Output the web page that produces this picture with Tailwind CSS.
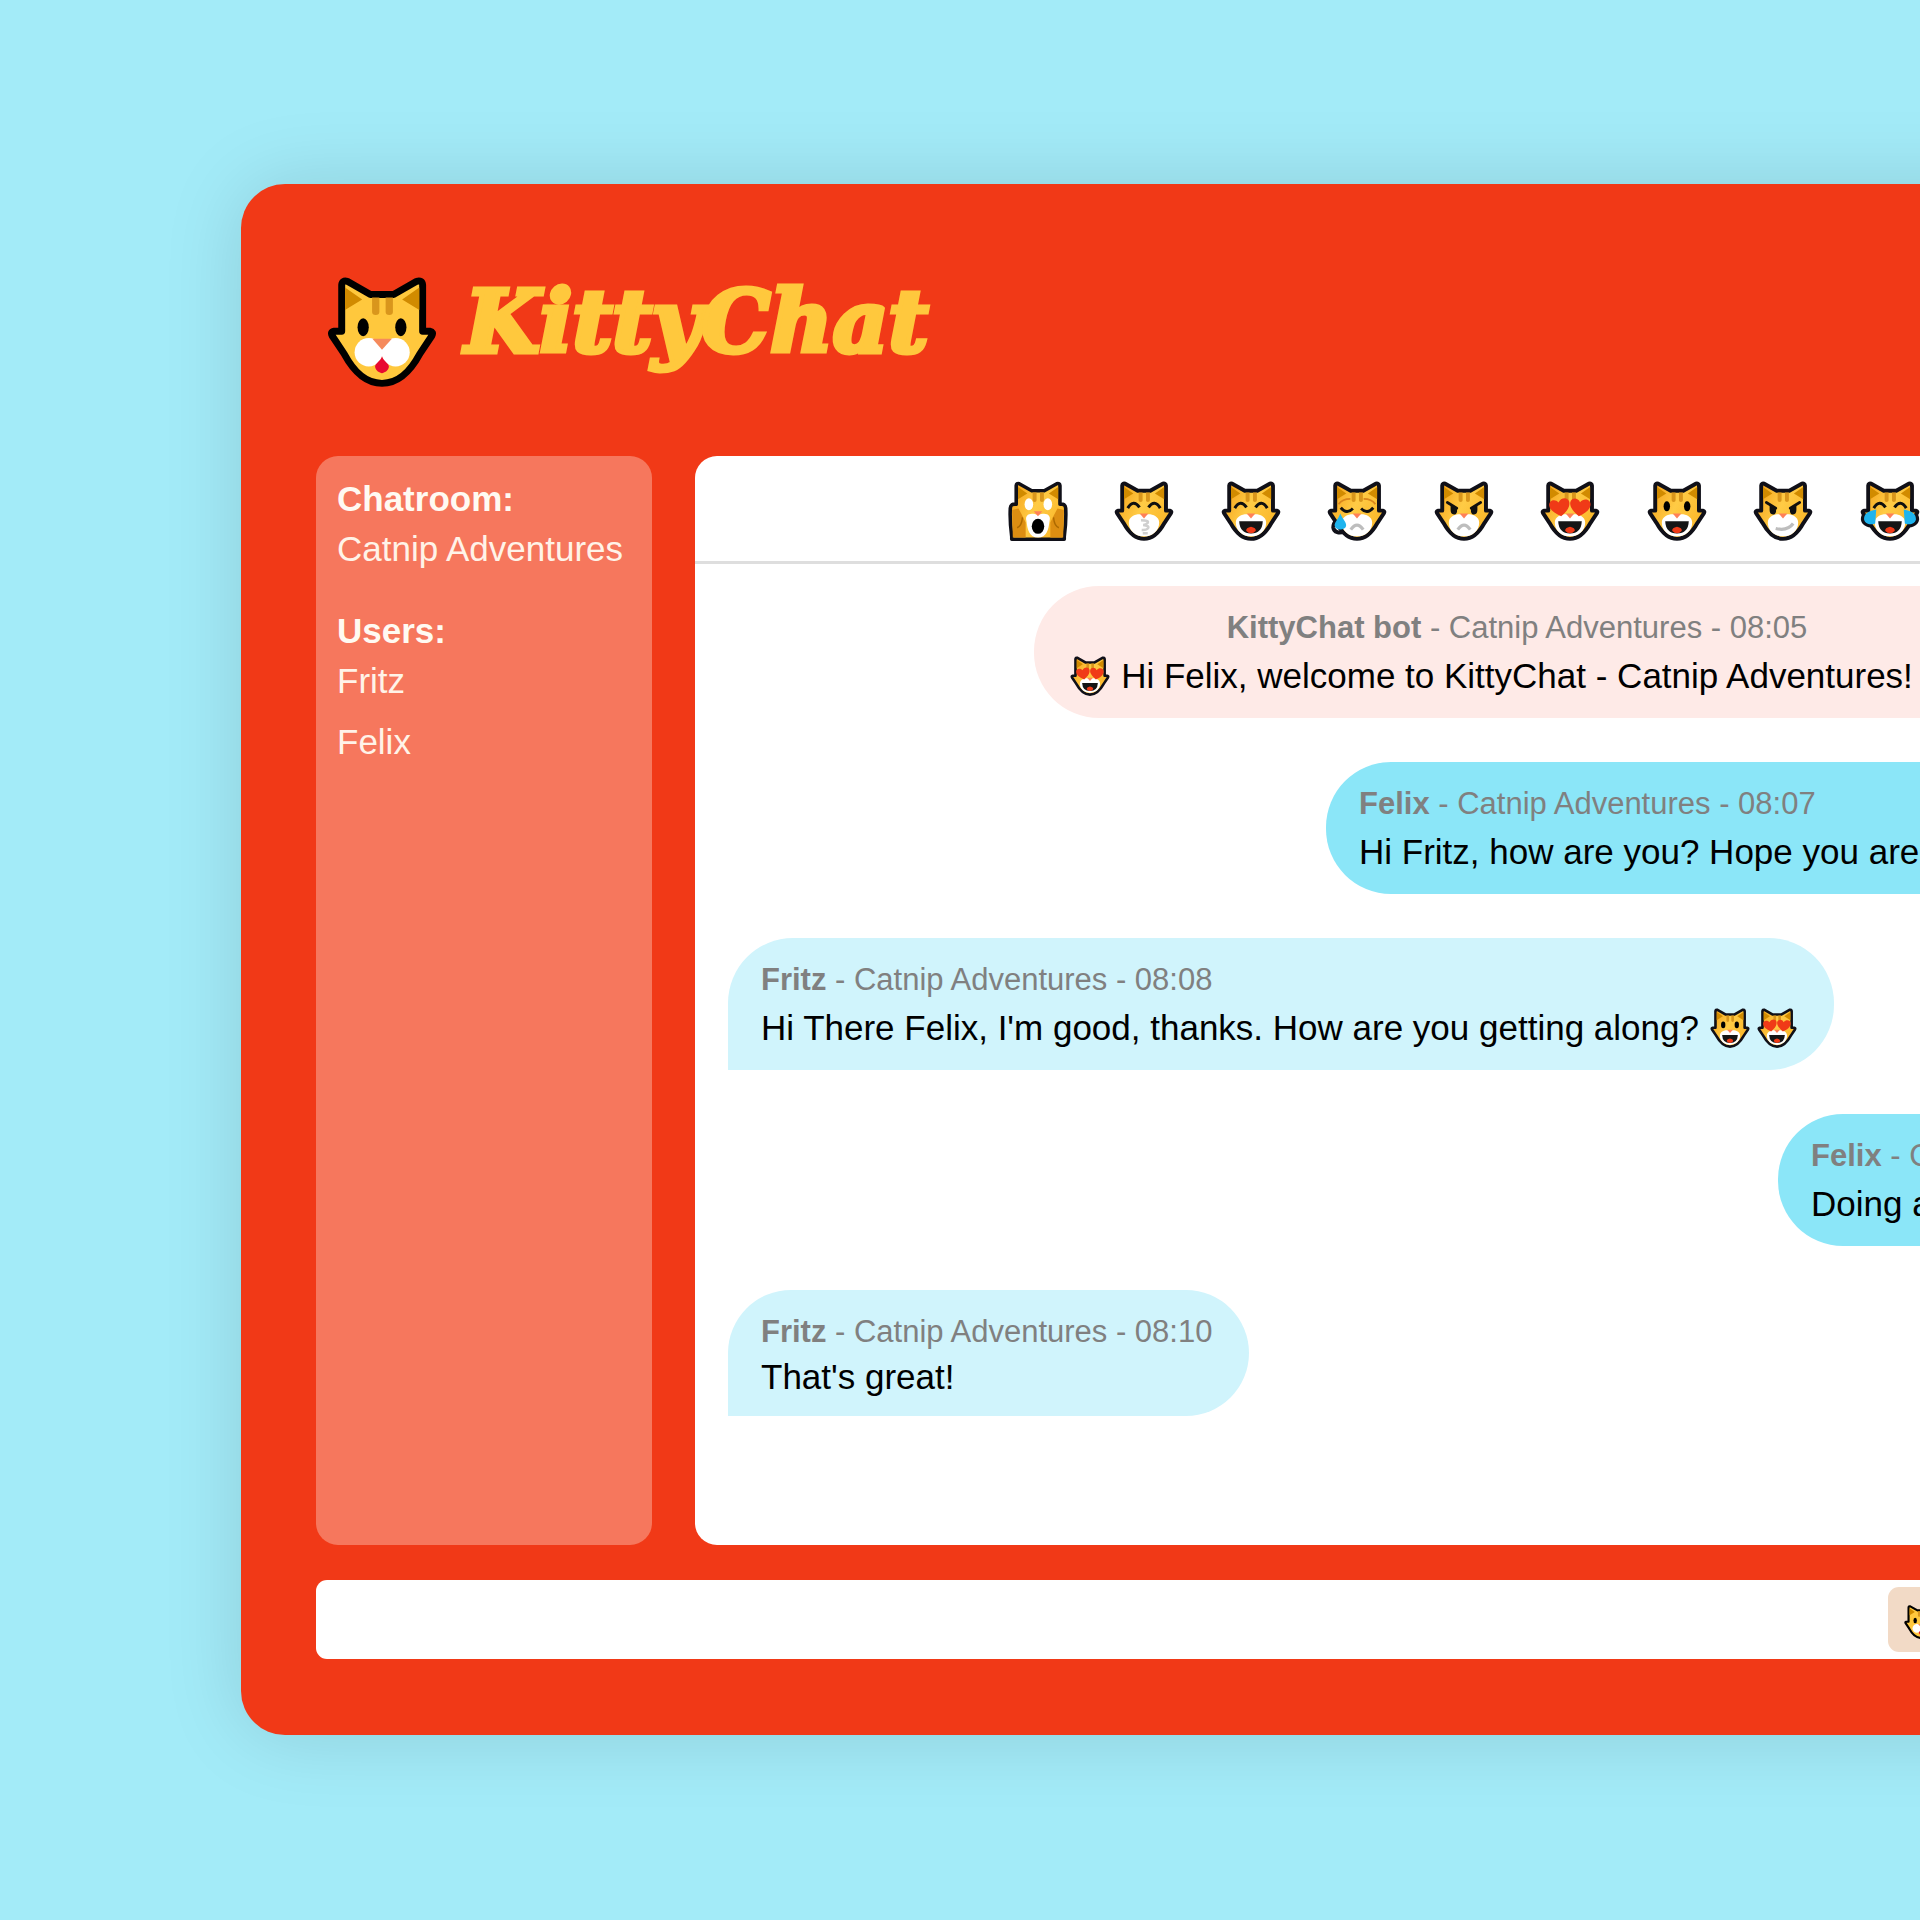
<!DOCTYPE html>
<html lang="en">
<head>
<meta charset="utf-8">
<meta name="viewport" content="width=device-width, initial-scale=1">
<title>KittyChat</title>
<script src="https://cdn.jsdelivr.net/npm/@tailwindcss/browser@4"></script>
</head>
<body class="min-h-screen overflow-x-hidden bg-[#a3ebf8] font-['Liberation_Sans',Arial,sans-serif]">

<!-- Shared cat artwork -->
<svg class="absolute size-0" aria-hidden="true">
  <defs>
    <linearGradient id="fur" gradientUnits="userSpaceOnUse" x1="50" y1="60" x2="330" y2="200">
      <stop offset="0" stop-color="#f5a31c"/><stop offset="0.5" stop-color="#ffcb45"/><stop offset="1" stop-color="#fbb92c"/>
    </linearGradient>
    <path id="outline" d="M42 184H65V44Q66 29 82 33L152 73H222L292 33Q309 29 310 44V184H332Q344 186 338 198L302 252C270 311 235 342 187 342C139 342 104 311 72 252L36 198Q30 186 42 184Z"/>
    <g id="marks">
      <path d="M75 52L127 88L75 120ZM300 52L248 88L300 120Z" fill="#d18b00"/>
      <path d="M157 82H179V126Q179 135 168 135Q157 135 157 126ZM198 82H220V126Q220 135 209 135Q198 135 198 126Z" fill="#d9961c"/>
    </g>
    <g id="head">
      <use href="#outline" fill="url(#fur)" stroke="#101018" stroke-width="22" stroke-linejoin="round"/>
      <use href="#marks"/>
    </g>
    <g id="muzzle">
      <path d="M187 209C212 196 272 208 272 250C272 296 235 328 187 328C139 328 102 296 102 250C102 208 162 196 187 209Z" fill="#fff"/>
      <path d="M163 200H211L187 228Z" fill="#ff8058"/>
    </g>
    <g id="laugh">
      <path d="M121 244H253Q250 312 187 312Q124 312 121 244Z" fill="#151515"/>
      <path d="M187 274Q216 280 214 297Q202 311 187 311Q172 311 160 297Q158 280 187 274Z" fill="#f03a17"/>
    </g>
    <path id="frown" d="M152 290Q187 240 222 290" fill="none" stroke="#bdbdbd" stroke-width="18"/>
    <g id="dots" fill="#000"><ellipse cx="130" cy="160" rx="18" ry="28"/><ellipse cx="244" cy="160" rx="18" ry="28"/></g>
    <path id="smile-eyes" d="M96 170Q128 118 162 166M212 166Q246 118 278 170" fill="none" stroke="#101010" stroke-width="17"/>
    <g id="angry-eyes"><path d="M94 138L146 170M280 138L228 170" stroke="#101010" stroke-width="16" stroke-linecap="round"/><path d="M112 148L148 168V190Q144 206 130 206Q112 202 112 180ZM262 148L226 168V190Q230 206 244 206Q262 202 262 180Z" fill="#101010"/></g>
    <path id="heart" d="M0 98C-40 72 -60 50 -58 26C-54 0 -20 -6 -4 20C12 -8 52 -6 56 24C58 52 34 78 0 98Z" fill="#f03a17"/>

    <symbol id="cat-logo" viewBox="22 20 330 333">
      <use href="#outline" fill="#ffc83d" stroke="#000" stroke-width="21" stroke-linejoin="round"/>
      <use href="#marks"/>
      <ellipse cx="130" cy="172" rx="17" ry="27"/><ellipse cx="244" cy="172" rx="17" ry="27"/>
      <circle cx="147" cy="248" r="43" fill="#fff"/><circle cx="228" cy="248" r="43" fill="#fff"/>
      <path d="M158 207H217L187 240Z" fill="#f58a5c"/>
      <path d="M187 260C191 276 208 280 208 292C206 304 194 311 187 311C180 311 168 304 166 292C166 280 183 276 187 260Z" fill="#e80a30"/>
    </symbol>
    <symbol id="cat-scream" viewBox="20 18 334 336">
      <path d="M40 344V330Q28 240 32 170Q34 144 65 148V44Q66 29 82 33L152 73H222L292 33Q309 29 310 44V148Q340 144 342 170Q346 240 334 330V344Z" fill="url(#fur)" stroke="#101018" stroke-width="20" stroke-linejoin="round"/>
      <use href="#marks"/>
      <path d="M42 180L78 172L98 210L118 250V334H46ZM332 180L296 172L276 210L256 250V334H328Z" fill="#dd8e12"/>
      <path d="M70 280Q96 270 100 222M304 280Q278 270 274 222" fill="none" stroke="#ad6a00" stroke-width="8"/>
      <ellipse cx="136" cy="148" rx="24" ry="34" fill="#fff"/><ellipse cx="242" cy="148" rx="24" ry="34" fill="#fff"/>
      <path d="M187 210C230 190 262 208 252 240C246 290 236 334 187 334C138 334 128 290 122 240C112 208 144 190 187 210Z" fill="#fff"/>
      <path d="M163 188H211L187 216Z" fill="#ff8058"/>
      <ellipse cx="187" cy="272" rx="35" ry="42" fill="#000"/>
    </symbol>
    <symbol id="cat-kiss" viewBox="20 18 334 336">
      <use href="#head"/><use href="#muzzle"/><use href="#smile-eyes"/>
      <path d="M170 238Q216 238 208 252Q200 264 182 264Q218 268 210 282Q202 294 174 292M180 310H208" fill="none" stroke="#cfcfcf" stroke-width="14"/>
    </symbol>
    <symbol id="cat-grin" viewBox="20 18 334 336"><use href="#head"/><use href="#muzzle"/><use href="#smile-eyes"/><use href="#laugh"/></symbol>
    <symbol id="cat-cry" viewBox="20 18 334 336">
      <path d="M93 202C70 236 52 256 54 278C58 306 90 314 112 300" fill="none" stroke="#101018" stroke-width="22"/>
      <use href="#head"/><use href="#muzzle"/><use href="#frown"/>
      <path d="M96 168Q130 208 164 172M210 172Q244 208 278 168" fill="none" stroke="#101010" stroke-width="16"/>
      <path d="M84 148Q104 118 150 118M290 148Q270 118 224 118" fill="none" stroke="#d9861c" stroke-width="10"/>
      <path d="M93 200C110 236 128 250 126 268C122 296 66 296 62 268C60 250 80 236 93 200Z" fill="#1fb4ee"/>
    </symbol>
    <symbol id="cat-pout" viewBox="20 18 334 336"><use href="#head"/><use href="#muzzle"/><use href="#angry-eyes"/><use href="#frown"/></symbol>
    <symbol id="cat-love" viewBox="20 18 334 336">
      <use href="#head"/><use href="#muzzle"/><use href="#laugh"/>
      <use href="#heart" transform="translate(124 118) rotate(-8)"/><use href="#heart" transform="translate(250 118) rotate(8)"/>
    </symbol>
    <symbol id="cat-happy" viewBox="20 18 334 336"><use href="#head"/><use href="#muzzle"/><use href="#dots"/><use href="#laugh"/></symbol>
    <symbol id="cat-wry" viewBox="20 18 334 336">
      <use href="#head"/><use href="#muzzle"/><use href="#angry-eyes"/>
      <path d="M146 284Q212 300 244 256" fill="none" stroke="#bdbdbd" stroke-width="18"/>
    </symbol>
    <symbol id="cat-joy" viewBox="20 18 334 336">
      <path d="M110 178C60 186 32 206 34 234C38 262 74 276 104 262ZM264 178C314 186 342 206 340 234C336 262 300 276 270 262Z" fill="#1fb4ee" stroke="#101018" stroke-width="20" stroke-linejoin="round"/>
      <use href="#head"/><use href="#muzzle"/>
      <path d="M110 178C60 186 40 206 42 234C46 256 74 268 104 256ZM264 178C314 186 334 206 332 234C328 256 300 268 270 256Z" fill="#1fb4ee"/>
      <use href="#smile-eyes"/><use href="#laugh"/>
    </symbol>
  </defs>
</svg>

<main class="-mr-[494px] ml-[241px] pt-[184px] pb-[185px]">
  <div class="rounded-[44px] bg-[#f13917] px-[75px] pt-[93px] pb-[76px] shadow-[0_0_80px_rgba(0,0,0,0.13)]">

    <header class="mb-[69px] flex h-[110px] items-center gap-7 pl-[11px]">
      <svg class="size-[110px] shrink-0" aria-hidden="true"><use href="#cat-logo"/></svg>
      <h1 class="pb-5 font-['DejaVu_Serif',serif] text-[86px] leading-[90px] font-bold text-[#ffc83d] italic [-webkit-text-stroke:5px_#ffc83d]">KittyChat</h1>
    </header>

    <div class="flex gap-[43px]">
      <aside class="w-[336px] shrink-0 rounded-[22px] bg-[#f6775d] px-[21px] pt-[18px] text-[35px] leading-[50px] text-[#fff3e8]">
        <h2 class="font-bold text-[#fffaf2]">Chatroom:</h2>
        <p class="mb-8 whitespace-nowrap">Catnip Adventures</p>
        <h2 class="font-bold text-[#fffaf2]">Users:</h2>
        <ul class="flex flex-col gap-[11px]">
          <li>Fritz</li>
          <li>Felix</li>
        </ul>
      </aside>

      <section class="min-w-0 flex-1 rounded-[22px] bg-white pb-[129px]" aria-label="Conversation">
        <div class="flex justify-center border-b-3 border-[#dedede] pt-[25px] pb-5">
          <div class="flex w-[1018px] justify-between">
            <button type="button" aria-label="Scream" class="size-[60px]"><svg class="size-full"><use href="#cat-scream"/></svg></button>
            <button type="button" aria-label="Kiss" class="size-[60px]"><svg class="size-full"><use href="#cat-kiss"/></svg></button>
            <button type="button" aria-label="Grin" class="size-[60px]"><svg class="size-full"><use href="#cat-grin"/></svg></button>
            <button type="button" aria-label="Cry" class="size-[60px]"><svg class="size-full"><use href="#cat-cry"/></svg></button>
            <button type="button" aria-label="Pout" class="size-[60px]"><svg class="size-full"><use href="#cat-pout"/></svg></button>
            <button type="button" aria-label="Love" class="size-[60px]"><svg class="size-full"><use href="#cat-love"/></svg></button>
            <button type="button" aria-label="Happy" class="size-[60px]"><svg class="size-full"><use href="#cat-happy"/></svg></button>
            <button type="button" aria-label="Wry" class="size-[60px]"><svg class="size-full"><use href="#cat-wry"/></svg></button>
            <button type="button" aria-label="Joy" class="size-[60px]"><svg class="size-full"><use href="#cat-joy"/></svg></button>
            <button type="button" aria-label="Cat" class="size-[60px]"><svg class="size-full"><use href="#cat-logo"/></svg></button>
          </div>
        </div>

        <div class="flex flex-col gap-11 px-[33px] pt-[22px] text-[35px] whitespace-nowrap text-black">
          <article class="self-center rounded-[65px] bg-[#feeae7] px-9 pt-[22px] pb-[14px]">
            <p class="text-center text-[31px] leading-10 text-[#808080]"><b>KittyChat bot</b> - Catnip Adventures - 08:05</p>
            <p class="flex items-center gap-[11px] leading-[56px]"><svg class="size-10" aria-hidden="true"><use href="#cat-love"/></svg>Hi Felix, welcome to KittyChat - Catnip Adventures!<svg class="size-10" aria-hidden="true"><use href="#cat-love"/></svg></p>
          </article>

          <article class="w-[980px] self-end rounded-[65px] rounded-br-none bg-[#8be6f8] px-[33px] pt-[22px] pb-[14px]">
            <p class="text-[31px] leading-10 text-[#808080]"><b>Felix</b> - Catnip Adventures - 08:07</p>
            <p class="leading-[56px]">Hi Fritz, how are you? Hope you are doing well!</p>
          </article>

          <article class="self-start rounded-[65px] rounded-bl-none bg-[#d0f4fc] pt-[22px] pr-[37px] pb-[14px] pl-[33px]">
            <p class="text-[31px] leading-10 text-[#808080]"><b>Fritz</b> - Catnip Adventures - 08:08</p>
            <p class="flex items-center gap-[7px] leading-[56px]"><span class="mr-1">Hi There Felix, I'm good, thanks. How are you getting along?</span><svg class="size-10" aria-hidden="true"><use href="#cat-happy"/></svg><svg class="size-10" aria-hidden="true"><use href="#cat-love"/></svg></p>
          </article>

          <article class="w-[528px] self-end rounded-[65px] rounded-br-none bg-[#8be6f8] px-[33px] pt-[22px] pb-[14px]">
            <p class="text-[31px] leading-10 text-[#808080]"><b>Felix</b> - Catnip Adventures - 08:09</p>
            <p class="leading-[56px]">Doing awesome, thanks!</p>
          </article>

          <article class="self-start rounded-[65px] rounded-bl-none bg-[#d0f4fc] pt-[22px] pr-[37px] pb-[14px] pl-[33px]">
            <p class="text-[31px] leading-10 text-[#808080]"><b>Fritz</b> - Catnip Adventures - 08:10</p>
            <p class="leading-[50px]">That's great!</p>
          </article>
        </div>
      </section>
    </div>

    <form class="mt-[35px] flex rounded-[11px] bg-white p-[7px]">
      <input type="text" aria-label="Message" class="h-[65px] min-w-0 flex-1 bg-transparent px-4 text-[35px] outline-none">
      <button type="button" class="flex h-[65px] w-[444px] items-center gap-3 rounded-[11px] bg-[#f2dac6] pt-1 pl-4 text-[31px]"><svg class="size-[34px]" aria-hidden="true"><use href="#cat-logo"/></svg>Send</button>
    </form>
  </div>
</main>
</body>
</html>
